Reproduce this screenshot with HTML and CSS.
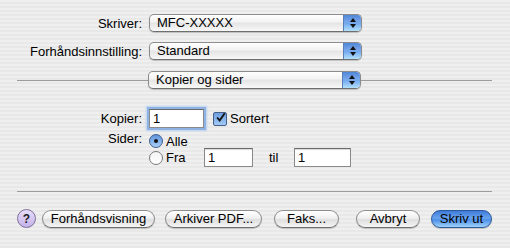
FILE: index.html
```html
<!DOCTYPE html>
<html lang="no">
  <head>
    <meta charset="utf-8" />
    <title>Skriv ut</title>
    <link rel="stylesheet" href="styles.css">
  </head>
  <body>
    <div class="dialog">
      <div class="row">
        <span class="label">Skriver:</span>
        <div class="popup"><span class="popup-text">MFC-XXXXX</span><span class="popup-arrows"><i class="up"></i><i class="down"></i></span></div>
      </div>
      <div class="row row-preset">
        <span class="label">Forhåndsinnstilling:</span>
        <div class="popup"><span class="popup-text">Standard</span><span class="popup-arrows"><i class="up"></i><i class="down"></i></span></div>
      </div>
      <div class="section-row">
        <span class="rule"></span>
        <div class="popup"><span class="popup-text">Kopier og sider</span><span class="popup-arrows"><i class="up"></i><i class="down"></i></span></div>
        <span class="rule"></span>
      </div>

      <div class="row row-copies">
        <span class="label">Kopier:</span>
        <div class="copies">
          <span class="field field-focus">1</span>
          <span class="checkbox"><svg width="13" height="13" viewBox="0 0 13 13"><path d="M2.5 6.5 L5.5 10 L11.5 1.5" fill="none" stroke="#111" stroke-width="2.2"/></svg></span>
          <span class="opt-text">Sortert</span>
        </div>
      </div>

      <div class="row row-pages">
        <span class="label">Sider:</span>
        <div class="pages">
          <div class="radio-row radio-first">
            <span class="radio radio-on"></span><span class="opt-text">Alle</span>
          </div>
          <div class="radio-row">
            <span class="radio"></span><span class="opt-text opt-fra">Fra</span>
            <span class="field field-from">1</span>
            <span class="opt-text opt-til">til</span>
            <span class="field field-to">1</span>
          </div>
        </div>
      </div>

      <div class="bottom-rule"></div>

      <div class="buttons">
        <span class="help">?</span>
        <span class="btn btn-preview">Forhåndsvisning</span>
        <span class="btn btn-pdf">Arkiver PDF...</span>
        <span class="btn btn-fax">Faks...</span>
        <span class="btn btn-cancel">Avbryt</span>
        <span class="btn btn-print">Skriv ut</span>
      </div>
    </div>
  </body>
</html>
```

FILE: styles.css
```css
body {
  margin: 0;
  font-family: "Liberation Sans", Arial, sans-serif;
  font-size: 13px;
  color: #000;
  background: repeating-linear-gradient(#efefef 0 2px, #e8e8e8 2px 4px);
  height: 248px;
  overflow: hidden;
}

.dialog {
  padding: 14px 18px 0 17px;
}

.row {
  display: grid;
  grid-template-columns: 125px auto;
  column-gap: 7px;
  align-items: center;
}

.label {
  text-align: right;
}

.row-preset {
  margin-top: 10px;
}

.section-row {
  display: flex;
  align-items: center;
  margin-top: 11px;
}

.rule {
  flex: 1;
  height: 1px;
  background: #9c9c9c;
}

.popup {
  width: 211px;
  height: 16px;
  border: 1px solid #8c8c8c;
  border-bottom-color: #6e6e6e;
  border-radius: 5px;
  background: linear-gradient(#ffffff, #f2f2f2 45%, #e4e4e4 50%, #f8f8f8);
  display: flex;
  overflow: hidden;
  box-shadow: 0 1px 1px rgba(0, 0, 0, 0.2);
}

.popup-text {
  flex: 1;
  padding-left: 7px;
  line-height: 16px;
}

.popup-arrows {
  width: 17px;
  border-left: 1px solid #5a7fb8;
  background: linear-gradient(#4f86d8, #7ba8ea 45%, #6fa6ee 50%, #b3e0fb);
  display: flex;
  flex-direction: column;
  align-items: center;
  justify-content: center;
  gap: 2px;
}

.popup-arrows i {
  width: 0;
  height: 0;
  border-left: 3px solid transparent;
  border-right: 3px solid transparent;
}

.popup-arrows .up {
  border-bottom: 4px solid #111;
}

.popup-arrows .down {
  border-top: 4px solid #111;
}

.row-copies {
  margin-top: 20px;
}

.copies {
  display: flex;
  align-items: center;
}

.field {
  height: 17px;
  border: 1px solid #8a8a8a;
  border-top-color: #6a6a6a;
  background: #fff;
  line-height: 17px;
  padding-left: 3px;
  box-sizing: content-box;
  box-shadow: inset 0 1px 1px rgba(0, 0, 0, 0.15);
}

.field-focus {
  width: 50px;
  box-shadow: 0 0 0 2px #8db2e3, 0 0 2px 3px #b9d0ef;
}

.checkbox {
  width: 12px;
  height: 12px;
  margin-left: 9px;
  border: 1px solid #44608a;
  border-radius: 2px;
  background: linear-gradient(#6d9ce0, #a3caf5);
  display: flex;
  align-items: center;
  justify-content: center;
}

.checkbox svg {
  margin-top: -3px;
  margin-left: 1px;
}

.opt-text {
  margin-left: 3px;
}

.row-pages {
  margin-top: 6px;
  align-items: start;
}

.row-pages .label {
  line-height: 15px;
  margin-top: -3px;
}

.radio-row {
  display: flex;
  align-items: center;
  height: 19px;
}

.radio-first {
  height: 14px;
}

.radio {
  width: 12px;
  height: 12px;
  border: 1px solid #7a7a7a;
  border-radius: 50%;
  background: linear-gradient(#f4f4f4, #ffffff);
  display: flex;
  align-items: center;
  justify-content: center;
}

.radio-on {
  border-color: #3f5f90;
  background: linear-gradient(#5d92dc, #a9d0f7);
}

.radio-on::after {
  content: "";
  width: 4px;
  height: 4px;
  border-radius: 50%;
  background: #111;
}

.opt-fra {
  width: 38px;
}

.field-from {
  width: 44px;
}

.opt-til {
  margin-left: 16px;
  width: 25px;
}

.field-to {
  width: 52px;
}

.bottom-rule {
  height: 1px;
  background: #9c9c9c;
  margin-top: 24px;
}

.buttons {
  display: flex;
  align-items: center;
  margin-top: 17px;
}

.help {
  width: 17px;
  height: 17px;
  border: 1px solid #7d6e9a;
  border-radius: 50%;
  background: linear-gradient(#e7dcfb, #c4b2ea);
  font-weight: bold;
  font-size: 12px;
  display: flex;
  align-items: center;
  justify-content: center;
  color: #222;
}

.btn {
  height: 16px;
  border: 1px solid #8e8e8e;
  border-bottom-color: #6f6f6f;
  border-radius: 9px;
  background: linear-gradient(#ffffff, #f0f0f0 45%, #dedede 55%, #f6f6f6);
  box-shadow: 0 1px 1px rgba(0, 0, 0, 0.2);
  text-align: center;
  line-height: 16px;
}

.btn-preview {
  width: 111px;
  margin-left: 6px;
}

.btn-pdf {
  width: 95px;
  margin-left: 10px;
}

.btn-fax {
  width: 63px;
  margin-left: 12px;
}

.btn-cancel {
  width: 62px;
  margin-left: 17px;
}

.btn-print {
  width: 59px;
  margin-left: 11px;
  border-color: #2b5a9e;
  background: linear-gradient(#3e7ad8, #6aa4ee 45%, #4d8ee8 55%, #9fd2fa);
}
```
